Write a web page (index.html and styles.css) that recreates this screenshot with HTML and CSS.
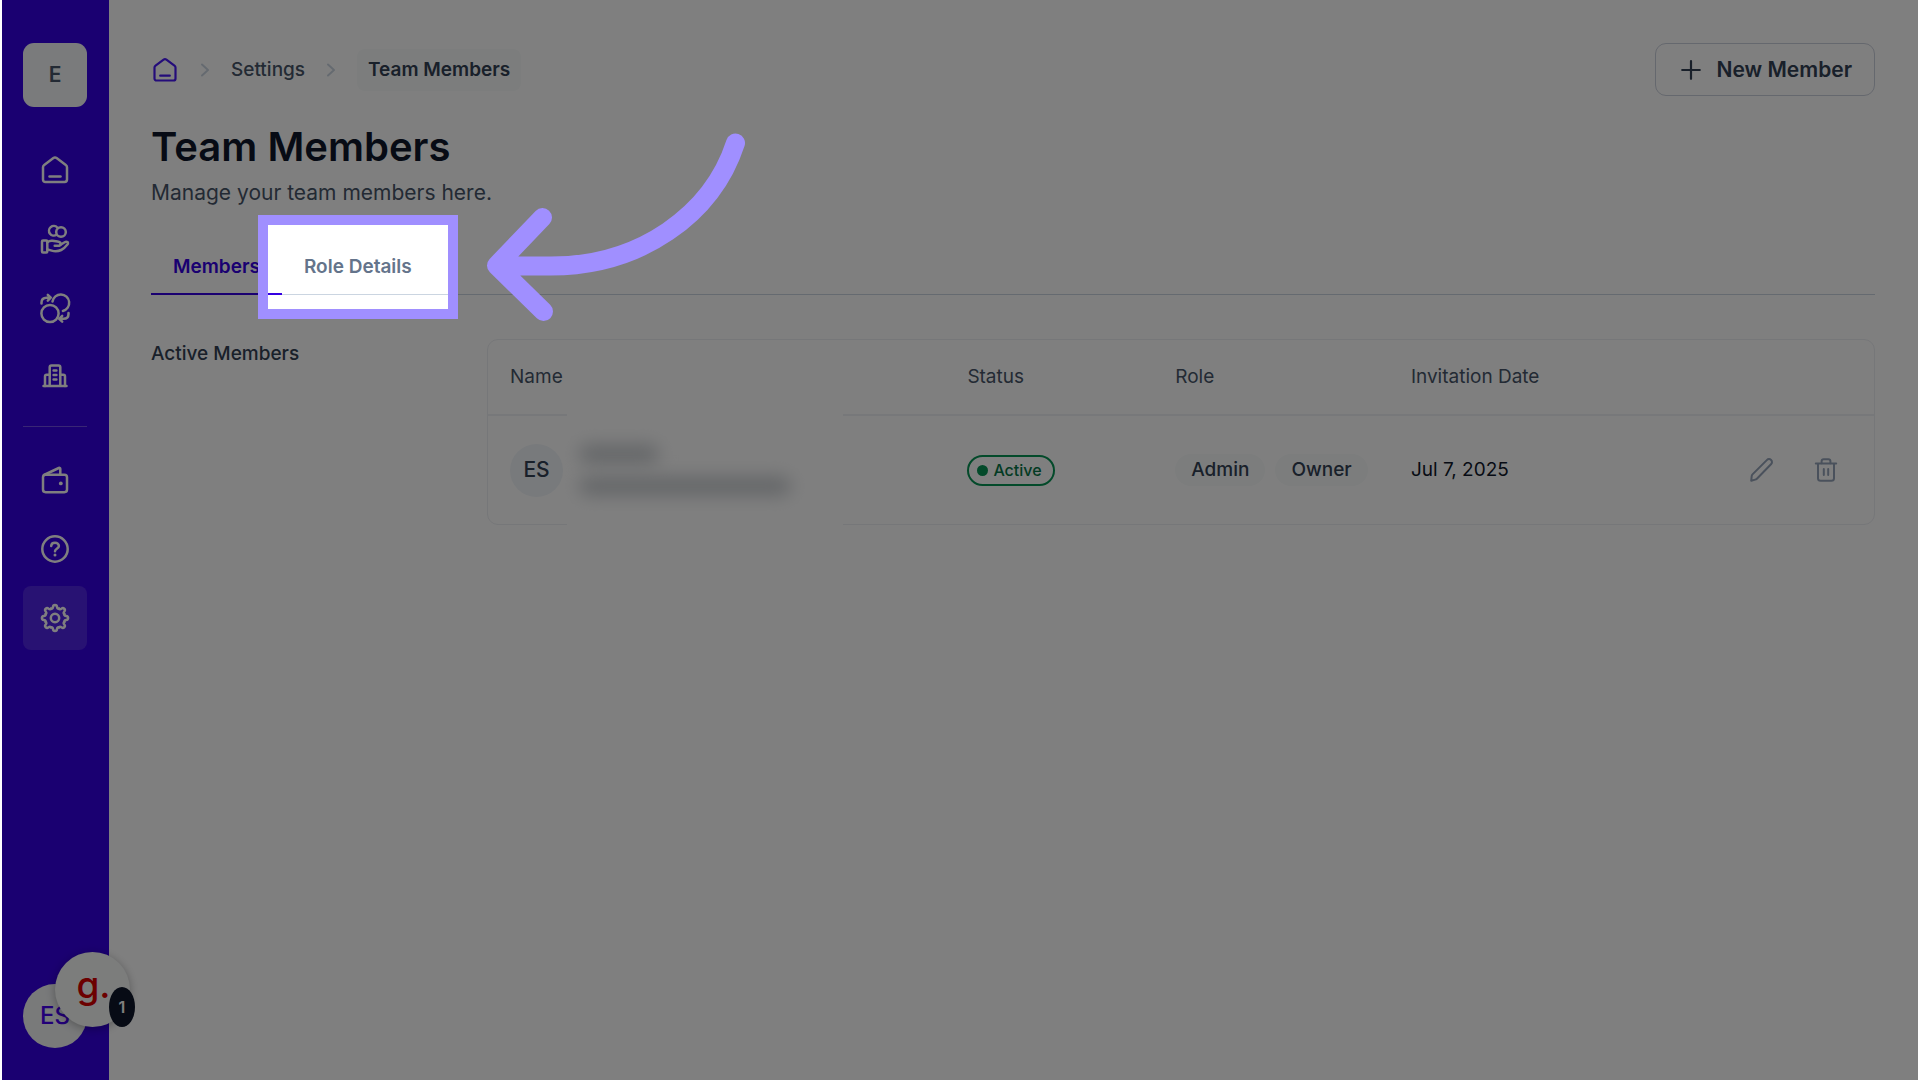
FILE: index.html
```html
<!DOCTYPE html>
<html lang="en">
  <head>
    <meta charset="utf-8" />
    <meta name="viewport" content="width=device-width, initial-scale=1.0" />
    <title>Team Members</title>
    <link rel="stylesheet" href="styles.css">
  </head>

  <body>
    <div class="app">
      <aside class="sidebar">
        <a class="workspace" href="#">E</a>
        <nav class="nav" aria-label="Main">
          <a class="nav-item" href="#" title="Home">
            <svg class="icon" viewBox="0 0 32 32">
              <path d="M4 13.2c0-1 .4-1.7 1.2-2.3l9.2-6.8c1-.7 2.2-.7 3.2 0l9.2 6.8c.8.6 1.2 1.3 1.2 2.3v12.4c0 1.4-1 2.4-2.4 2.4H6.4C5 28 4 27 4 25.6z" />
              <path d="M10.5 22.5h11" />
            </svg>
          </a>
          <a class="nav-item" href="#" title="Payments">
            <svg class="icon" viewBox="0 0 32 32">
              <path d="M17.5 11.8A4.8 4.8 0 1 1 18.3 4.5" />
              <circle cx="22" cy="9" r="4.8" />
              <rect x="3" y="17.5" width="5.3" height="12" rx="1" />
              <path d="M8.3 19.2c1.8-1.3 3.4-1.7 5.2-1.4l5 .8c2.2.4 3.2 1.2 3.2 2.3 0 1.3-1.2 1.9-3 1.9h-3" />
              <path d="M21.5 21.8l4.2-2.6c2-1.2 4.4.2 2.7 2.3-1.8 2.3-4 4.5-6.2 5.5-3.2 1.4-6.4 1.5-9.5.6l-4.4-1.2" />
            </svg>
          </a>
          <a class="nav-item" href="#" title="Transactions">
            <svg class="icon" viewBox="0 0 32 32">
              <circle cx="11" cy="21.5" r="8.6" />
              <path d="M13.5 9.5a8.4 8.4 0 1 1 10.4 9.5" />
              <path d="M2.5 11.5v-1c0-3 2-4.800 5-4.800h4M8.800 2.800l3 2.900-3 2.900" />
              <path d="M29.5 21v1c0 3-2 4.8-5 4.8h-4M23.2 23.9l-3 2.9 3 2.9" />
            </svg>
          </a>
          <a class="nav-item" href="#" title="Companies">
            <svg class="icon" viewBox="0 0 32 32">
              <path d="M4.5 25h23M10.7 25V6.2c0-1 .7-1.7 1.7-1.700h7.200c1 0 1.700.7 1.700 1.700V25" />
              <path d="M6 25V15.5c0-1 .6-1.7 1.6-1.7h3M26 25V15.5c0-1-.6-1.7-1.6-1.7h-3" />
              <path d="M14.6 9.5h2.8M14.6 14h2.8M14.6 18.5h2.8" />
            </svg>
          </a>
          <hr class="nav-divider">
          <a class="nav-item" href="#" title="Wallet">
            <svg class="icon" viewBox="0 0 32 32">
              <rect x="4" y="10.7" width="24" height="17.5" rx="2.6" />
              <path d="M5 11l14.800-7c.9-.4 1.5 0 1.5.9v5.800" />
              <circle class="dot" cx="21.8" cy="19.4" r="1.9" />
            </svg>
          </a>
          <a class="nav-item" href="#" title="Help">
            <svg class="icon" viewBox="0 0 32 32">
              <circle cx="16" cy="16" r="12.7" />
              <path d="M12.2 13c.1-2 1.7-3.3 3.8-3.3s3.9 1.4 3.9 3.3c0 2.8-3.9 2.8-3.9 5.2" />
              <circle class="dot" cx="16" cy="22" r="1.5" />
            </svg>
          </a>
          <a class="nav-item active" href="#" title="Settings">
            <svg class="icon" viewBox="-16 -16 32 32">
              <path id="tooth" d="M-3.9-9.4C-2.8-9-2.1-9.8-2-11.200c.2-2.500 3.800-2.500 4 0 .1 1.400.8 2.200 1.900 1.800" />
              <use href="#tooth" transform="rotate(45)" />
              <use href="#tooth" transform="rotate(90)" />
              <use href="#tooth" transform="rotate(135)" />
              <use href="#tooth" transform="rotate(180)" />
              <use href="#tooth" transform="rotate(225)" />
              <use href="#tooth" transform="rotate(270)" />
              <use href="#tooth" transform="rotate(315)" />
              <circle cx="0" cy="0" r="4.2" />
            </svg>
          </a>
        </nav>
        <div class="user">
          <a class="user-avatar" href="#">ES</a>
          <button class="widget" type="button" title="Notifications">
            g.<span class="widget-count">1</span>
          </button>
        </div>
      </aside>

      <main class="main">
        <header class="topbar">
          <nav class="breadcrumb" aria-label="Breadcrumb">
            <a class="crumb-home" href="#" title="Home">
              <svg class="icon" viewBox="0 0 32 32">
                <path d="M4 13.2c0-1 .4-1.7 1.2-2.3l9.2-6.8c1-.7 2.2-.7 3.2 0l9.2 6.8c.8.6 1.2 1.3 1.2 2.3v12.4c0 1.4-1 2.4-2.4 2.4H6.4C5 28 4 27 4 25.6z" />
                <path d="M10.5 22.5h11" />
              </svg>
            </a>
            <svg class="chevron" viewBox="0 0 16 16"><path d="M5 2.5l6 5.5-6 5.5" /></svg>
            <a class="crumb" href="#">Settings</a>
            <svg class="chevron" viewBox="0 0 16 16"><path d="M5 2.5l6 5.5-6 5.5" /></svg>
            <span class="crumb current">Team Members</span>
          </nav>
          <button class="btn-new" type="button">
            <svg class="plus" viewBox="0 0 20 20"><path d="M10 2v16M2 10h16" /></svg>
            New Member
          </button>
        </header>

        <h1 class="title">Team Members</h1>
        <p class="subtitle">Manage your team members here.</p>

        <div class="tabs">
          <a class="tab active" href="#">Members</a>
          <a class="tab" href="#">Role Details
            <span class="spotlight"></span>
            <svg class="arrow" viewBox="480 130 270 200">
              <path d="M735.5 143C712 215 640 266 551 266q-30 0-54-1M542.5 217.5L496.5 265.5 543.5 311.5" />
            </svg>
          </a>
        </div>

        <section class="members">
          <h2 class="section-title">Active Members</h2>
          <div class="card">
            <table class="table">
              <colgroup>
                <col class="col-name">
                <col class="col-status">
                <col class="col-role">
                <col class="col-date">
                <col>
              </colgroup>
              <thead>
                <tr>
                  <th>Name</th>
                  <th>Status</th>
                  <th>Role</th>
                  <th>Invitation Date</th>
                  <th></th>
                </tr>
              </thead>
              <tbody>
                <tr>
                  <td class="name-cell">
                    <span class="avatar">ES</span>
                    <div class="redacted">
                      <span class="smudge short"></span>
                      <span class="smudge"></span>
                    </div>
                  </td>
                  <td><span class="status">Active</span></td>
                  <td>
                    <div class="roles">
                      <span class="role">Admin</span>
                      <span class="role">Owner</span>
                    </div>
                  </td>
                  <td>Jul 7, 2025</td>
                  <td>
                    <div class="actions">
                      <button class="action" type="button" title="Edit">
                        <svg viewBox="0 0 28 28">
                          <path d="M3.2 24.8l.5-4.7c.1-.7.3-1.2.8-1.7L18.8 4.1c1.3-1.3 3.1-1.3 4.3-.1s1.2 3-.1 4.3L8.9 22.7c-.5.5-1 .8-1.7.9z" />
                        </svg>
                      </button>
                      <button class="action" type="button" title="Delete">
                        <svg viewBox="0 0 28 28">
                          <path d="M3.8 7.5h20.4M6 7.8v14.4c0 1.5 1 2.6 2.6 2.6h10.800c1.600 0 2.600-1.100 2.600-2.600V7.800" />
                          <path d="M9.6 7.3V5.2c0-1.2.8-2 2-2h4.8c1.2 0 2 .8 2 2v2.1M11.8 13v6M16.2 13v6" />
                        </svg>
                      </button>
                    </div>
                  </td>
                </tr>
              </tbody>
            </table>
          </div>
        </section>
      </main>
    </div>
  </body>
</html>
```
FILE: styles.css
```css
* {
  box-sizing: border-box;
}

body {
  margin: 0;
  background-color: #ffffff;
  color: #0f172a;
  font-family: Inter, "Liberation Sans", sans-serif;
  font-size: 19px;
  line-height: 28px;
}

a {
  color: inherit;
  text-decoration: none;
}

button {
  font-family: inherit;
  cursor: pointer;
}

svg {
  display: block;
  fill: none;
  stroke: currentColor;
  stroke-width: 2;
  stroke-linecap: round;
  stroke-linejoin: round;
}

.app {
  display: flex;
  min-height: 100vh;
  margin: 0 2px;
  overflow: hidden;
}

/* sidebar */
.sidebar {
  display: flex;
  flex-direction: column;
  flex: none;
  padding: 43px 22px 32px 21px;
  background-color: #3500e2;
  color: #ffffff;
}

.workspace {
  display: flex;
  align-items: center;
  justify-content: center;
  width: 64px;
  height: 64px;
  margin-bottom: 31px;
  border-radius: 11px;
  background-color: #f5f7f8;
  color: #475569;
  font-size: 21px;
  font-weight: 600;
}

.nav {
  display: flex;
  flex-direction: column;
  gap: 5px;
}

.nav-item {
  display: flex;
  align-items: center;
  justify-content: center;
  width: 64px;
  height: 64px;
  border-radius: 8px;
}

.nav-item.active {
  background-color: rgba(255, 255, 255, 0.14);
}

.nav-divider {
  width: 64px;
  margin: 12px 0 16px;
  border: 0;
  border-top: 1px solid rgba(255, 255, 255, 0.3);
}

.icon {
  width: 32px;
  height: 32px;
  stroke-width: 2.5;
}

.icon .dot {
  fill: currentColor;
  stroke: none;
}

.user {
  position: relative;
  margin-top: auto;
}

.user-avatar {
  display: flex;
  align-items: center;
  justify-content: center;
  width: 64px;
  height: 64px;
  border-radius: 50%;
  background-color: #f2f4f5;
  color: #4400f0;
  font-size: 24px;
  font-weight: 500;
}

.widget {
  position: absolute;
  left: 32px;
  bottom: 21px;
  width: 75px;
  height: 75px;
  padding: 0 0 9px 2px;
  border: 0;
  border-radius: 50%;
  background-color: #f8faf9;
  box-shadow: 0 2px 10px rgba(0, 0, 0, 0.3);
  color: #d80000;
  font-size: 37px;
  font-weight: 500;
  line-height: 40px;
}

.widget-count {
  position: absolute;
  right: -5px;
  bottom: 0;
  width: 26px;
  height: 40px;
  border-radius: 50%;
  background-color: #0f172a;
  color: #ffffff;
  font-size: 16px;
  font-weight: 600;
}

/* page */
.main {
  flex: 1;
  min-width: 0;
  padding: 43px 43px 43px 42px;
}

.topbar {
  display: flex;
  align-items: center;
  justify-content: space-between;
  height: 53px;
}

.breadcrumb {
  display: flex;
  align-items: center;
}

.crumb-home {
  color: #4818f5;
}

.crumb-home .icon {
  width: 28px;
  height: 28px;
}

.chevron {
  width: 16px;
  height: 16px;
  margin: 0 18px;
  color: #cbd5e1;
}

.crumb {
  color: #475569;
  font-weight: 500;
}

.crumb.current {
  padding: 7px 11px;
  border-radius: 8px;
  background-color: #f8fbfa;
  color: #334155;
  font-weight: 600;
}

.btn-new {
  display: flex;
  align-items: center;
  gap: 14px;
  height: 53px;
  padding: 0 22px 0 24px;
  border: 1px solid #cbd0dc;
  border-radius: 11px;
  background-color: #ffffff;
  color: #334155;
  font-size: 21px;
  font-weight: 600;
}

.plus {
  width: 22px;
  height: 22px;
}

.title {
  margin: 27px 0 8px;
  font-size: 40px;
  font-weight: 600;
  line-height: 48px;
}

.subtitle {
  margin: 0;
  color: #475569;
  font-size: 21px;
}

.tabs {
  display: flex;
  height: 54px;
  margin-top: 34px;
  border-bottom: 1px solid #cbd5e1;
}

.tab {
  position: relative;
  display: flex;
  align-items: center;
  height: 54px;
  padding: 0 22px;
  border-bottom: 2px solid transparent;
  color: #64748b;
  font-weight: 600;
}

.tab.active {
  border-color: #3500e2;
  color: #3500e2;
}

/* frame round the tab, the shadow dims the rest of the page */
.spotlight {
  position: absolute;
  inset: -26px -24px;
  z-index: 10;
  border: 10px solid #a08fff;
  box-shadow: 0 0 0 3000px rgba(0, 0, 0, 0.5);
}

.arrow {
  position: absolute;
  top: -111px;
  left: calc(100% + 46px);
  z-index: 11;
  width: 270px;
  height: 200px;
  color: #a08fff;
  stroke-width: 19;
}

.members {
  display: grid;
  grid-template-columns: 304px 1fr;
  gap: 32px;
  margin-top: 44px;
}

.section-title {
  margin: 0;
  color: #334155;
  font-size: 19px;
  font-weight: 500;
  line-height: 30px;
}

.card {
  border: 1px solid #eceef2;
  border-radius: 11px;
}

.table {
  width: 100%;
  border-collapse: separate;
  border-spacing: 0;
  table-layout: fixed;
}

.col-name {
  width: 33%;
}

.col-status {
  width: 15%;
}

.col-role {
  width: 17%;
}

.col-date {
  width: 17%;
}

.table th {
  height: 76px;
  padding: 0 22px;
  border-bottom: 2px solid #eff1f4;
  color: #475569;
  font-weight: 400;
  text-align: left;
}

.table td {
  height: 108px;
  padding: 0 22px;
}

.name-cell {
  position: relative;
}

.avatar {
  display: flex;
  align-items: center;
  justify-content: center;
  width: 53px;
  height: 53px;
  border-radius: 50%;
  background-color: #f1f5f9;
  color: #334155;
  font-size: 21px;
  font-weight: 500;
}

.redacted {
  position: absolute;
  inset: -4px auto -4px 79px;
  display: flex;
  flex-direction: column;
  justify-content: center;
  gap: 14px;
  width: 276px;
  padding-left: 12px;
  background-color: #ffffff;
}

.smudge {
  width: 212px;
  height: 18px;
  border-radius: 9px;
  background-color: #c6cace;
  filter: blur(9px);
}

.smudge.short {
  width: 80px;
}

.status {
  display: inline-flex;
  align-items: center;
  gap: 5px;
  height: 31px;
  padding: 0 11px 0 8px;
  border: 2px solid #079455;
  border-radius: 16px;
  color: #067647;
  font-size: 16px;
  font-weight: 500;
}

.status::before {
  content: "";
  width: 11px;
  height: 11px;
  border-radius: 50%;
  background-color: #079455;
}

.roles {
  display: flex;
  gap: 10px;
}

.role {
  padding: 2px 16px;
  border-radius: 16px;
  background-color: #f8fbfa;
  color: #334155;
  font-weight: 500;
}

.actions {
  display: flex;
  justify-content: flex-end;
  gap: 11px;
}

.action {
  display: flex;
  align-items: center;
  justify-content: center;
  width: 53px;
  height: 53px;
  padding: 0;
  border: 0;
  background: none;
  color: #94a3b8;
}

.action svg {
  width: 28px;
  height: 28px;
}
```
